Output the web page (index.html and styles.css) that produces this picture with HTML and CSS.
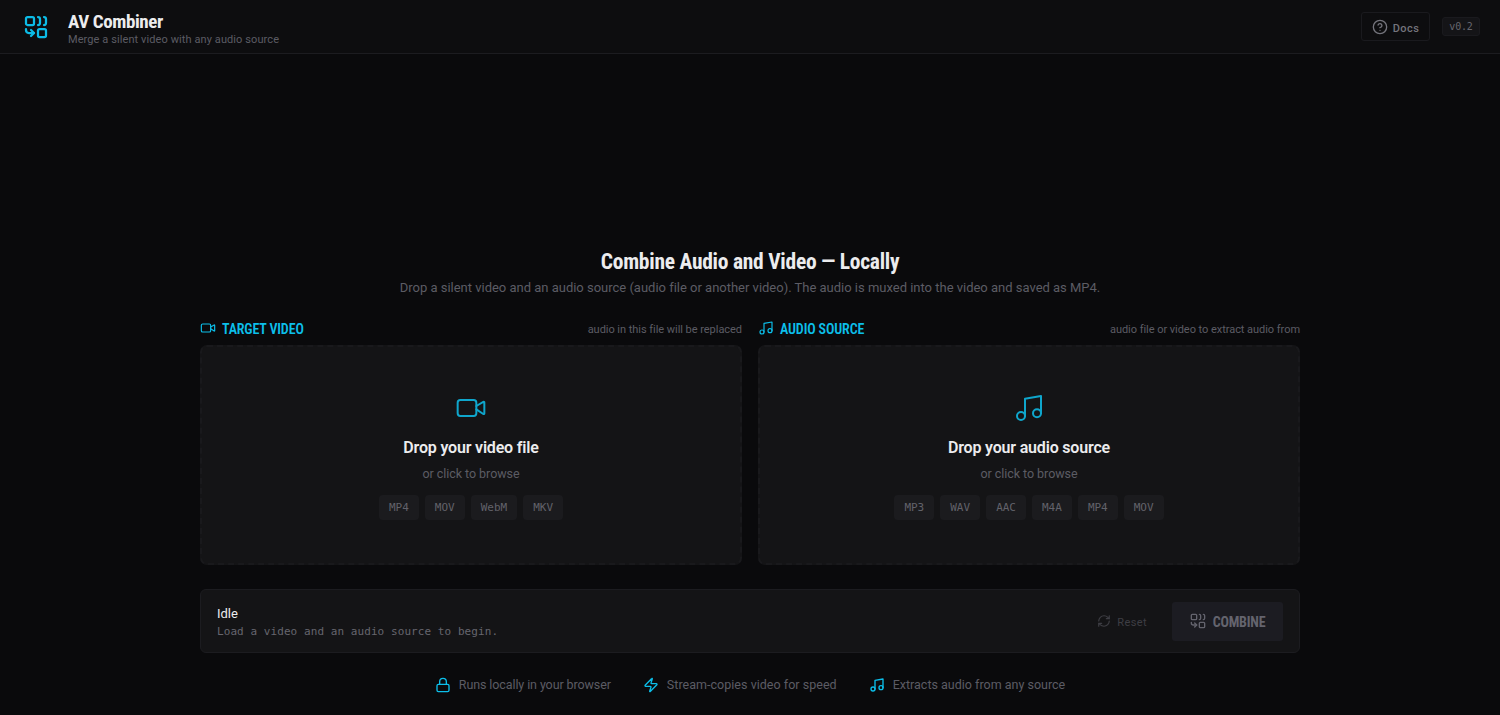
FILE: index.html
```html
<!DOCTYPE html>
<html lang="en">
<head>
    <meta charset="UTF-8">
    <meta name="viewport" content="width=device-width, initial-scale=1.0">
    <title>AV Combiner</title>
    <link rel="stylesheet" href="styles.css">
</head>
<body>

<!-- shared icons -->
<svg class="sprite" width="0" height="0">
    <symbol id="icon-combine" viewBox="0 0 24 24">
        <rect x="2" y="2" width="8" height="8" rx="1.5"/>
        <path d="M14 2c1.1 0 2 .9 2 2v4c0 1.1-.9 2-2 2"/>
        <path d="M20 2c1.1 0 2 .9 2 2v4c0 1.1-.9 2-2 2"/>
        <path d="M10 18H5c-1.7 0-3-1.3-3-3v-1"/>
        <path d="m7 21 3-3-3-3"/>
        <rect x="14" y="14" width="8" height="8" rx="1.5"/>
    </symbol>
    <symbol id="icon-video" viewBox="0 0 24 24">
        <path d="m16 13 5.223 3.482a.5.5 0 0 0 .777-.416V7.87a.5.5 0 0 0-.752-.432L16 10.5"/>
        <rect x="2" y="6" width="14" height="12" rx="2"/>
    </symbol>
    <symbol id="icon-music" viewBox="0 0 24 24">
        <path d="M9 18V5l12-2v13"/>
        <circle cx="6" cy="18" r="3"/>
        <circle cx="18" cy="16" r="3"/>
    </symbol>
    <symbol id="icon-help" viewBox="0 0 24 24">
        <circle cx="12" cy="12" r="10"/>
        <path d="M9.09 9a3 3 0 0 1 5.83 1c0 2-3 3-3 3"/>
        <path d="M12 17h.01"/>
    </symbol>
    <symbol id="icon-refresh" viewBox="0 0 24 24">
        <path d="M3 12a9 9 0 0 1 9-9 9.75 9.75 0 0 1 6.74 2.74L21 8"/>
        <path d="M21 3v5h-5"/>
        <path d="M21 12a9 9 0 0 1-9 9 9.75 9.75 0 0 1-6.74-2.74L3 16"/>
        <path d="M8 16H3v5"/>
    </symbol>
    <symbol id="icon-lock" viewBox="0 0 24 24">
        <rect x="3" y="11" width="18" height="11" rx="2"/>
        <path d="M7 11V7a5 5 0 0 1 10 0v4"/>
    </symbol>
    <symbol id="icon-zap" viewBox="0 0 24 24">
        <path d="M4 14a1 1 0 0 1-.78-1.63l9.9-10.2a.5.5 0 0 1 .86.46l-1.92 6.02A1 1 0 0 0 13 10h7a1 1 0 0 1 .78 1.63l-9.9 10.2a.5.5 0 0 1-.86-.46l1.92-6.02A1 1 0 0 0 11 14z"/>
    </symbol>
</svg>

<header class="header">
    <div class="logo"><svg class="icon"><use href="#icon-combine"/></svg></div>
    <div class="brand">
        <h1>AV Combiner</h1>
        <p>Merge a silent video with any audio source</p>
    </div>
    <button class="docs-btn" type="button"><svg class="icon"><use href="#icon-help"/></svg><span>Docs</span></button>
    <span class="version">v0.2</span>
</header>

<main class="main">
    <section class="intro">
        <h2>Combine Audio and Video — Locally</h2>
        <p>Drop a silent video and an audio source (audio file or another video). The audio is muxed into the video and saved as MP4.</p>
    </section>

    <section class="panels">
        <div class="panel">
            <div class="panel-head">
                <svg class="icon"><use href="#icon-video"/></svg>
                <h3>TARGET VIDEO</h3>
                <span class="hint">audio in this file will be replaced</span>
            </div>
            <div class="dropzone">
                <svg class="icon"><use href="#icon-video"/></svg>
                <p class="drop-title">Drop your video file</p>
                <p class="drop-sub">or click to browse</p>
                <div class="formats">
                    <span>MP4</span><span>MOV</span><span>WebM</span><span>MKV</span>
                </div>
            </div>
        </div>
        <div class="panel">
            <div class="panel-head">
                <svg class="icon"><use href="#icon-music"/></svg>
                <h3>AUDIO SOURCE</h3>
                <span class="hint">audio file or video to extract audio from</span>
            </div>
            <div class="dropzone">
                <svg class="icon"><use href="#icon-music"/></svg>
                <p class="drop-title">Drop your audio source</p>
                <p class="drop-sub">or click to browse</p>
                <div class="formats">
                    <span>MP3</span><span>WAV</span><span>AAC</span><span>M4A</span><span>MP4</span><span>MOV</span>
                </div>
            </div>
        </div>
    </section>

    <section class="status">
        <div class="status-text">
            <p class="status-title">Idle</p>
            <p class="status-detail">Load a video and an audio source to begin.</p>
        </div>
        <button class="reset-btn" type="button" disabled><svg class="icon"><use href="#icon-refresh"/></svg><span>Reset</span></button>
        <button class="combine-btn" type="button" disabled><svg class="icon"><use href="#icon-combine"/></svg><span>COMBINE</span></button>
    </section>

    <ul class="features">
        <li class="feature-local"><svg class="icon"><use href="#icon-lock"/></svg><span>Runs locally in your browser</span></li>
        <li class="feature-speed"><svg class="icon"><use href="#icon-zap"/></svg><span>Stream-copies video for speed</span></li>
        <li class="feature-audio"><svg class="icon"><use href="#icon-music"/></svg><span>Extracts audio from any source</span></li>
    </ul>
</main>

</body>
</html>
```
FILE: styles.css
```css
* {
    box-sizing: border-box;
    margin: 0;
    padding: 0;
}

body {
    height: 715px;
    overflow: hidden;
    background: #0a0a0c;
    color: #ececee;
    font-family: Roboto, "Liberation Sans", sans-serif;
}

button {
    font-family: inherit;
    background: none;
    border: none;
}

.sprite {
    position: absolute;
}

.icon {
    display: block;
    flex: none;
    width: 16px;
    height: 16px;
    fill: none;
    stroke: currentColor;
    stroke-width: 2;
    stroke-linecap: round;
    stroke-linejoin: round;
}

h1, h2, h3, .combine-btn {
    font-family: Roboto, "Liberation Sans Narrow", sans-serif;
    font-stretch: 75%;
    font-weight: 700;
    white-space: nowrap;
}

.header {
    display: flex;
    align-items: center;
    height: 54px;
    padding: 0 20px;
    background: #0d0d0f;
    border-bottom: 1px solid #1c1c20;
}

.logo {
    display: flex;
    justify-content: center;
    width: 32px;
    margin-right: 16px;
    color: #0cbbe6;
}

.logo .icon {
    width: 24px;
    height: 24px;
    stroke-width: 2.25;
}

.brand {
    flex: 1;
    padding-top: 4px;
}

.brand h1 {
    font-size: 19px;
    line-height: 22px;
    letter-spacing: -0.4px;
}

.brand p {
    color: #5c5c64;
    font-size: 11px;
    line-height: 14px;
    letter-spacing: 0.09px;
}

.docs-btn {
    display: flex;
    align-items: center;
    justify-content: center;
    gap: 5px;
    width: 69px;
    height: 29px;
    margin-right: 12px;
    border: 1px solid #1a1a1e;
    border-radius: 3px;
    color: #74747c;
    font-size: 11px;
    font-weight: 500;
    letter-spacing: 0.4px;
}

.docs-btn span {
    padding-top: 3px;
}

.version {
    width: 38px;
    height: 19px;
    background: #141417;
    border: 1px solid #1a1a1e;
    border-radius: 3px;
    color: #66666e;
    font: 10px/17px "DejaVu Sans Mono", monospace;
    letter-spacing: -0.2px;
    text-align: center;
}

.main {
    width: 1100px;
    margin: 0 auto;
    padding-top: 194px;
}

.intro {
    text-align: center;
}

.intro h2 {
    font-size: 21.5px;
    line-height: 28px;
    letter-spacing: -0.26px;
}

.intro p {
    color: #5c5c64;
    font-size: 13px;
    line-height: 24px;
    letter-spacing: -0.01px;
    white-space: nowrap;
}

.panels {
    display: grid;
    grid-template-columns: 1fr 1fr;
    gap: 16px;
    margin-top: 18px;
}

.panel-head {
    display: flex;
    align-items: center;
    height: 20px;
    margin-bottom: 7px;
    color: #0cbfea;
}

.panel-head .icon {
    stroke-width: 1.75;
}

.panel-head h3 {
    margin-left: 6px;
    padding-top: 2px;
    font-size: 14px;
    font-weight: 600;
    letter-spacing: -0.14px;
}

.hint {
    margin-left: auto;
    padding-top: 2px;
    color: #5c5c64;
    font-size: 11px;
    letter-spacing: -0.04px;
}

.dropzone {
    display: flex;
    flex-direction: column;
    align-items: center;
    height: 220px;
    padding-top: 45px;
    background: #141416;
    border: 2px dashed #19191c;
    border-radius: 7px;
}

.dropzone .icon {
    width: 32px;
    height: 32px;
    color: #0fa6cc;
    stroke-width: 1.5;
}

.drop-title {
    margin-top: 13px;
    font-size: 16px;
    font-weight: 600;
    line-height: 22px;
    letter-spacing: -0.18px;
}

.drop-sub {
    margin-top: 6px;
    color: #5c5c64;
    font-size: 12.5px;
    line-height: 18px;
    letter-spacing: -0.05px;
}

.formats {
    display: flex;
    gap: 6px;
    margin-top: 12px;
}

.formats span {
    height: 25px;
    padding: 0 10px;
    background: #1b1b1e;
    border-radius: 4px;
    color: #62626a;
    font: 11px/25px "DejaVu Sans Mono", monospace;
}

.status {
    display: flex;
    align-items: center;
    height: 64px;
    margin-top: 24px;
    padding: 0 16px;
    background: #141416;
    border: 1px solid #1c1c20;
    border-radius: 6px;
}

.status-text {
    flex: 1;
    padding-top: 4px;
}

.status-title {
    font-size: 13px;
    line-height: 18px;
}

.status-detail {
    color: #66666e;
    font: 11px/18px "DejaVu Sans Mono", monospace;
    letter-spacing: 0.07px;
}

.reset-btn {
    display: flex;
    align-items: center;
    gap: 6px;
    margin-right: 25px;
    color: #3e3e44;
    font-size: 11px;
    letter-spacing: 0.4px;
}

.reset-btn span {
    padding-top: 2px;
}

.reset-btn .icon {
    width: 14px;
    height: 14px;
}

.combine-btn {
    display: flex;
    align-items: center;
    justify-content: center;
    gap: 7px;
    width: 111px;
    height: 39px;
    background: #1c1c22;
    border-radius: 3px;
    color: #64646e;
    font-size: 14px;
    letter-spacing: -0.2px;
}

.combine-btn span {
    padding-top: 1px;
}

.features {
    display: flex;
    justify-content: center;
    gap: 32px;
    margin-top: 23px;
    list-style: none;
}

.features li {
    display: flex;
    align-items: center;
    gap: 8px;
    color: #5c5c64;
    font-size: 12.5px;
    line-height: 18px;
}

.features .icon {
    color: #0cbfea;
}

.feature-local {
    letter-spacing: -0.1px;
}

.feature-speed {
    letter-spacing: 0.03px;
}
```
